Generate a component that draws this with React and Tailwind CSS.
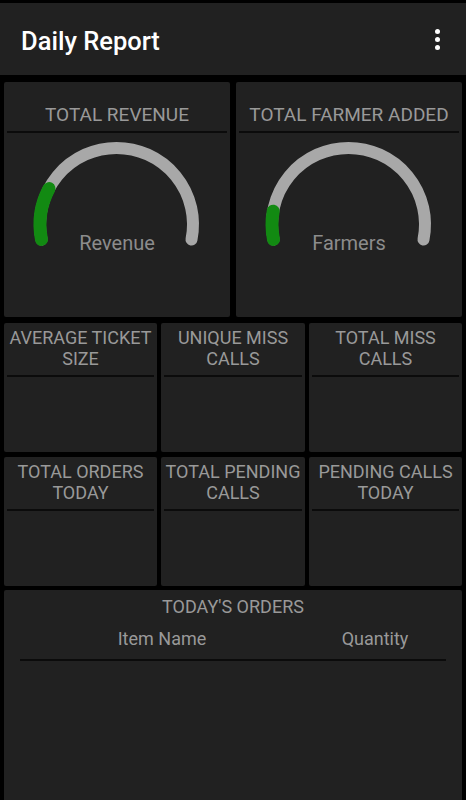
import React from "react";

// 統計カード（タイトル＋空の本文）
const StatCard = ({ title }) => (
  <div className="bg-[#212121] rounded-[2px] flex flex-col">
    <div className="pt-[4px] pb-[6px] px-[2px] text-center text-[18px] leading-[21px] text-[#999999] uppercase">
      {title}
    </div>
    <div className="mx-[3px] h-[2px] bg-[#0b0b0b]" />
  </div>
);

// 半円ゲージ
const Gauge = ({ label, greenEnd }) => (
  <svg width="226" height="184" viewBox="0 0 226 184" className="block">
    <path
      d="M 37.5 106.5 A 76.5 76.5 0 1 1 187.5 106.5"
      fill="none"
      stroke="#a8a8a8"
      strokeWidth="12"
      strokeLinecap="round"
    />
    <path
      d={`M 37.5 106.5 A 76.5 76.5 0 0 1 ${greenEnd}`}
      fill="none"
      stroke="#128a12"
      strokeWidth="13"
      strokeLinecap="round"
    />
    <text
      x="113"
      y="117"
      textAnchor="middle"
      fontSize="20"
      fill="#8c8c8c"
      fontFamily="Roboto, sans-serif"
    >
      {label}
    </text>
  </svg>
);

const GaugeCard = ({ title, label, greenEnd }) => (
  <div className="bg-[#212121] rounded-[2px] flex flex-col overflow-hidden">
    <div className="pt-[22px] pb-[5px] text-center text-[19px] leading-[22px] text-[#999999] whitespace-nowrap">
      {title}
    </div>
    <div className="mx-[3px] h-[2px] bg-[#0b0b0b]" />
    <Gauge label={label} greenEnd={greenEnd} />
  </div>
);

const App = () => {
  const row1 = ["Average Ticket Size", "Unique Miss Calls", "Total Miss Calls"];
  const row2 = ["Total Orders Today", "Total Pending Calls", "Pending Calls Today"];

  return (
    <div className="w-[466px] h-[800px] overflow-hidden bg-black pt-[3px] font-['Roboto',sans-serif]">
      {/* Header */}
      <div className="h-[72px] bg-[#212121] flex items-center justify-between pl-[21px] pr-[26px]">
        <h1 className="text-[25.5px] font-medium text-white leading-none mt-[5px]">Daily Report</h1>
        <div className="flex flex-col gap-[3px] items-center">
          <span className="w-[5px] h-[5px] rounded-full bg-white" />
          <span className="w-[5px] h-[5px] rounded-full bg-white" />
          <span className="w-[5px] h-[5px] rounded-full bg-white" />
        </div>
      </div>

      <div className="px-[4px] pt-[7px]">
        {/* Gauges */}
        <div className="grid grid-cols-2 gap-[6px] h-[235px]">
          <GaugeCard title="TOTAL REVENUE" label="Revenue" greenEnd="45 55.6" />
          <GaugeCard title="TOTAL FARMER ADDED" label="Farmers" greenEnd="37.2 78.2" />
        </div>

        {/* Stat rows */}
        <div className="grid grid-cols-[153px_144px_153px] gap-[4px] h-[129px] mt-[6px]">
          {row1.map((t) => (
            <StatCard key={t} title={t} />
          ))}
        </div>
        <div className="grid grid-cols-[153px_144px_153px] gap-[4px] h-[129px] mt-[5px]">
          {row2.map((t) => (
            <StatCard key={t} title={t} />
          ))}
        </div>

        {/* Today's orders */}
        <div className="bg-[#212121] rounded-[2px] mt-[4px] h-[240px] px-[16px]">
          <div className="pt-[6px] text-center text-[18px] leading-[22px] text-[#999999]">
            TODAY'S ORDERS
          </div>
          <div className="flex text-[18px] leading-[22px] text-[#999999] mt-[10px] pb-[9px]">
            <div className="flex-[2] text-center">Item Name</div>
            <div className="flex-1 text-center">Quantity</div>
          </div>
          <div className="h-[2px] bg-[#0b0b0b]" />
        </div>
      </div>
    </div>
  );
};

export default App;
